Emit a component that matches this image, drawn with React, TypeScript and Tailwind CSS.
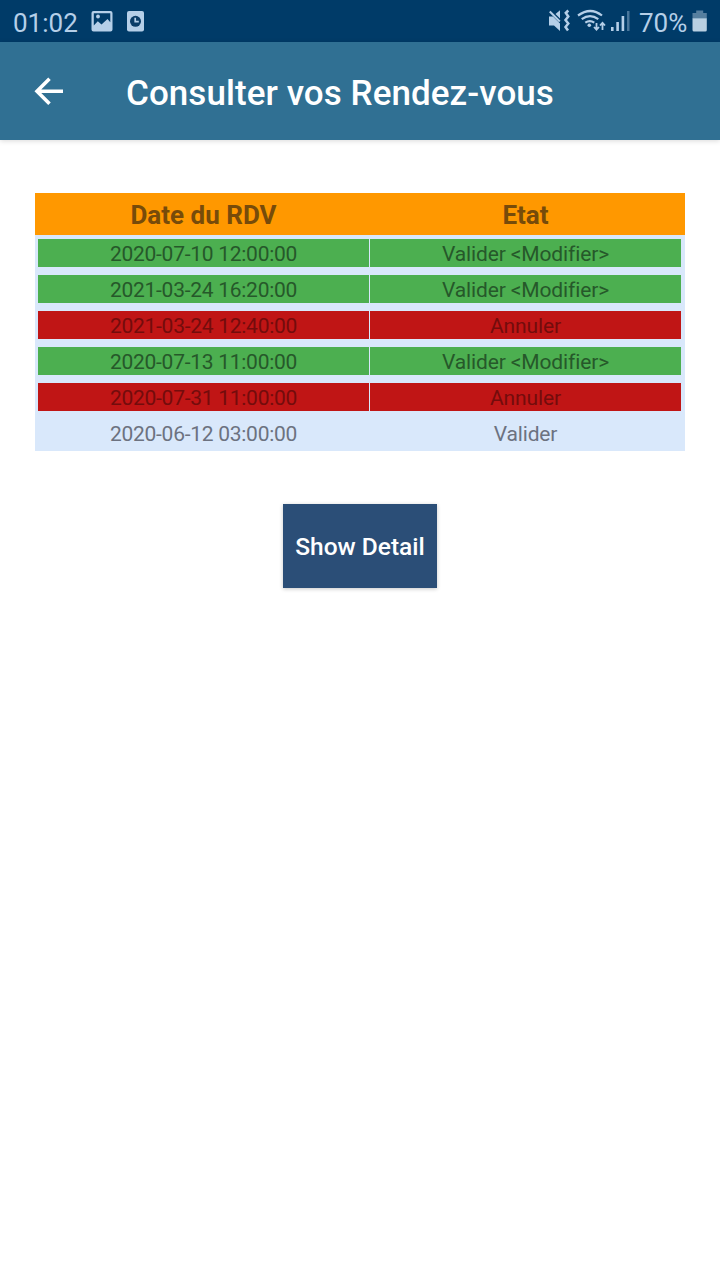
type Appointment = { date: string; label: string; tone: string };

const GREEN = "bg-[#4caf50] text-[#26582a]";
const RED = "bg-[#c01515] text-[#730c0c]";
const PLAIN = "text-[#6c7280]";

const appointments: Appointment[] = [
  { date: "2020-07-10 12:00:00", label: "Valider <Modifier>", tone: GREEN },
  { date: "2021-03-24 16:20:00", label: "Valider <Modifier>", tone: GREEN },
  { date: "2021-03-24 12:40:00", label: "Annuler", tone: RED },
  { date: "2020-07-13 11:00:00", label: "Valider <Modifier>", tone: GREEN },
  { date: "2020-07-31 11:00:00", label: "Annuler", tone: RED },
  { date: "2020-06-12 03:00:00", label: "Valider", tone: PLAIN },
];

function StatusBar() {
  return (
    <div className="flex h-[42px] items-center bg-[#003b68] pl-[13px] text-[26px] leading-none text-[#b5cfe8]">
      <span className="w-[78px] whitespace-nowrap pt-[3px]">01:02</span>
      <svg className="h-[42px] w-[60px]" viewBox="91 0 60 42">
        <path
          fill="#b5cfe8"
          fillRule="evenodd"
          d="M93.500 11h17q2 0 2 2v16.500q0 2-2 2h-17q-2 0-2-2V13q0-2 2-2zM93.800 13.300v12.200l4-4.200 3.700 3.200 6-5.400 2.800 3.200V13.300z"
        />
        <circle cx="98" cy="16.500" r="1.900" fill="#b5cfe8" />
        <rect x="127" y="11" width="17" height="20.500" rx="2" fill="#b5cfe8" />
        <circle cx="135.500" cy="21.300" r="5.500" fill="#0a3d68" />
        <path d="M135.200 17.700v4h3.600" fill="none" stroke="#b5cfe8" strokeWidth="1.700" />
      </svg>
      <svg className="ml-auto h-[42px] w-[90px]" viewBox="546 0 90 42">
        <g fill="#b5cfe8">
          <path d="M549 16.500h4l7 7V31l-6-5.500h-5z" />
          <path d="M555.500 14l4.500-3.700v8.200z" />
          <circle cx="589.300" cy="25.300" r="1.800" />
          <rect x="611" y="27" width="2.600" height="4" />
          <rect x="616.300" y="22" width="2.600" height="9" />
          <rect x="621.600" y="16" width="2.600" height="15" />
          <rect x="627" y="11" width="2.500" height="20" opacity=".4" />
        </g>
        <g fill="none" stroke="#b5cfe8" strokeWidth="2.200">
          <path d="M549.800 11.500l10 10" strokeWidth="2" />
          <path d="M568.300 10.500l-2.500 2.500 2.500 3.500-2.800 3.500 2.800 3.500-2.800 3.500 2.500 3.500" strokeWidth="2.500" />
          <path d="M578 15.500q12.500-9 24 0M581.700 19.200q8.300-6 16.600 0M585.300 22.600q4.500-3 9 0" />
          <path d="M596.500 23v6.500M594 27l2.500 2.700L599 27M602.500 30v-7M600 25.500l2.500-2.700 2.500 2.700" strokeWidth="1.800" />
        </g>
      </svg>
      <span className="ml-[3px] w-[51px] whitespace-nowrap pt-[3px]">70%</span>
      <svg className="mr-[11px] h-[42px] w-[19px]" viewBox="690 0 19 42">
        <path d="M692.500 13h3.700v-2.500h7V13h3.600v5.500h-14.300z" fill="#567f9f" />
        <path d="M692.500 18.300h14.300v11.700q0 1.500-1.500 1.500h-11.300q-1.500 0-1.500-1.500z" fill="#b9d0e2" />
      </svg>
    </div>
  );
}

export default function App() {
  return (
    <div className="min-h-screen w-[720px] bg-white font-['Roboto',sans-serif]">
      <StatusBar />
      <header className="flex h-[98px] items-center bg-[#307093] pl-[34px] text-white shadow-[0_1px_5px_rgba(0,0,0,0.15)]">
        <svg className="h-[30px] w-[32px]" viewBox="0 0 32 30" fill="none" stroke="currentColor" strokeWidth="3.600">
          <path d="M29 15.300H3.500M15.500 2.800L3 15.300l12.500 12.500" />
        </svg>
        <h1 className="ml-[60px] whitespace-nowrap pt-[4px] text-[35px] font-medium leading-none tracking-[0.060px]">
          Consulter vos Rendez-vous
        </h1>
      </header>
      <main className="flex flex-col items-center pt-[53px]">
        <section className="w-[650px] bg-[#d9e8fb] pb-[4px]">
          <div className="mb-[4px] grid h-[42px] grid-cols-[337px_307px] items-center bg-[#ff9800] text-center text-[26px] font-bold leading-none text-[#774b0a]">
            <span className="pt-[1px]">Date du RDV</span>
            <span className="pt-[1px]">Etat</span>
          </div>
          <div className="flex flex-col gap-[8px] pl-[3px] pr-[4px]">
            {appointments.map(({ date, label, tone }) => (
              <div
                key={date}
                className="grid h-[28px] grid-cols-[331px_311px] gap-px text-center text-[21px] leading-[28px] *:h-[28px] *:pt-px"
              >
                <span className={`${tone} tracking-[-0.270px]`}>{date}</span>
                <span className={`${tone} tracking-[-0.130px]`}>{label}</span>
              </div>
            ))}
          </div>
        </section>
        <button className="mt-[53px] h-[84px] w-[154px] whitespace-nowrap bg-[#2b4e77] pt-[2px] text-[24.500px] font-medium text-white shadow-[0_1px_4px_rgba(0,0,0,0.22)]">
          Show Detail
        </button>
      </main>
    </div>
  );
}
